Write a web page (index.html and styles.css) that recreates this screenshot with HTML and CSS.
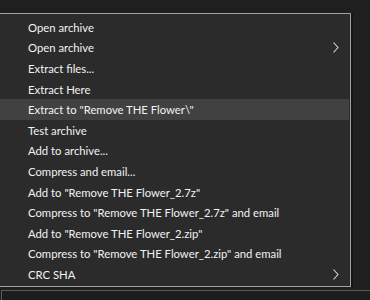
FILE: index.html
```html
<!DOCTYPE html>
<html>
<head>
<meta charset="utf-8">
<link rel="stylesheet" href="styles.css">
</head>
<body>
<div class="menu">
  <div class="item">Open archive</div>
  <div class="item">Open archive<svg class="chev" viewBox="0 0 6 11" width="6" height="11"><path d="M0.5 0.5 L5 5.5 L0.5 10.5" fill="none" stroke="#d8d8d8" stroke-width="1.1"/></svg></div>
  <div class="item">Extract files...</div>
  <div class="item">Extract Here</div>
  <div class="item active">Extract to "Remove THE Flower\"</div>
  <div class="item">Test archive</div>
  <div class="item">Add to archive...</div>
  <div class="item">Compress and email...</div>
  <div class="item">Add to "Remove THE Flower_2.7z"</div>
  <div class="item">Compress to "Remove THE Flower_2.7z" and email</div>
  <div class="item">Add to "Remove THE Flower_2.zip"</div>
  <div class="item">Compress to "Remove THE Flower_2.zip" and email</div>
  <div class="item">CRC SHA<svg class="chev" viewBox="0 0 6 11" width="6" height="11"><path d="M0.5 0.5 L5 5.5 L0.5 10.5" fill="none" stroke="#d8d8d8" stroke-width="1.1"/></svg></div>
</div>
<div class="below"></div>
</body>
</html>
```
FILE: styles.css
```css
html, body {
  margin: 0;
  padding: 0;
  background: #1f1f1f;
  overflow: hidden;
  height: 300px;
}
.menu {
  margin-top: 13px;
  margin-left: -2px;
  width: 353px;
  box-sizing: border-box;
  background: #2b2b2b;
  border: 1px solid #a0a0a0;
  border-left: none;
  padding: 3px 0 1px 0;
  box-shadow: 2px 0 0 #141414;
  font-family: "Lato", "Segoe UI", sans-serif;
  font-size: 11.3px;
  color: #f2f2f2;
}
.item {
  height: 20.6px;
  display: flex;
  align-items: center;
  justify-content: space-between;
  padding-left: 30px;
  padding-right: 10px;
  margin-right: 1px;
  white-space: nowrap;
}
.item.active {
  background: #414141;
}
.chev {
  display: block;
}
.below {
  margin-top: 3px;
  margin-left: 1px;
  height: 20px;
  border-top: 1px solid #5a5a5a;
  border-left: 1px solid #5a5a5a;
  background: #1c1c1c;
}
```
